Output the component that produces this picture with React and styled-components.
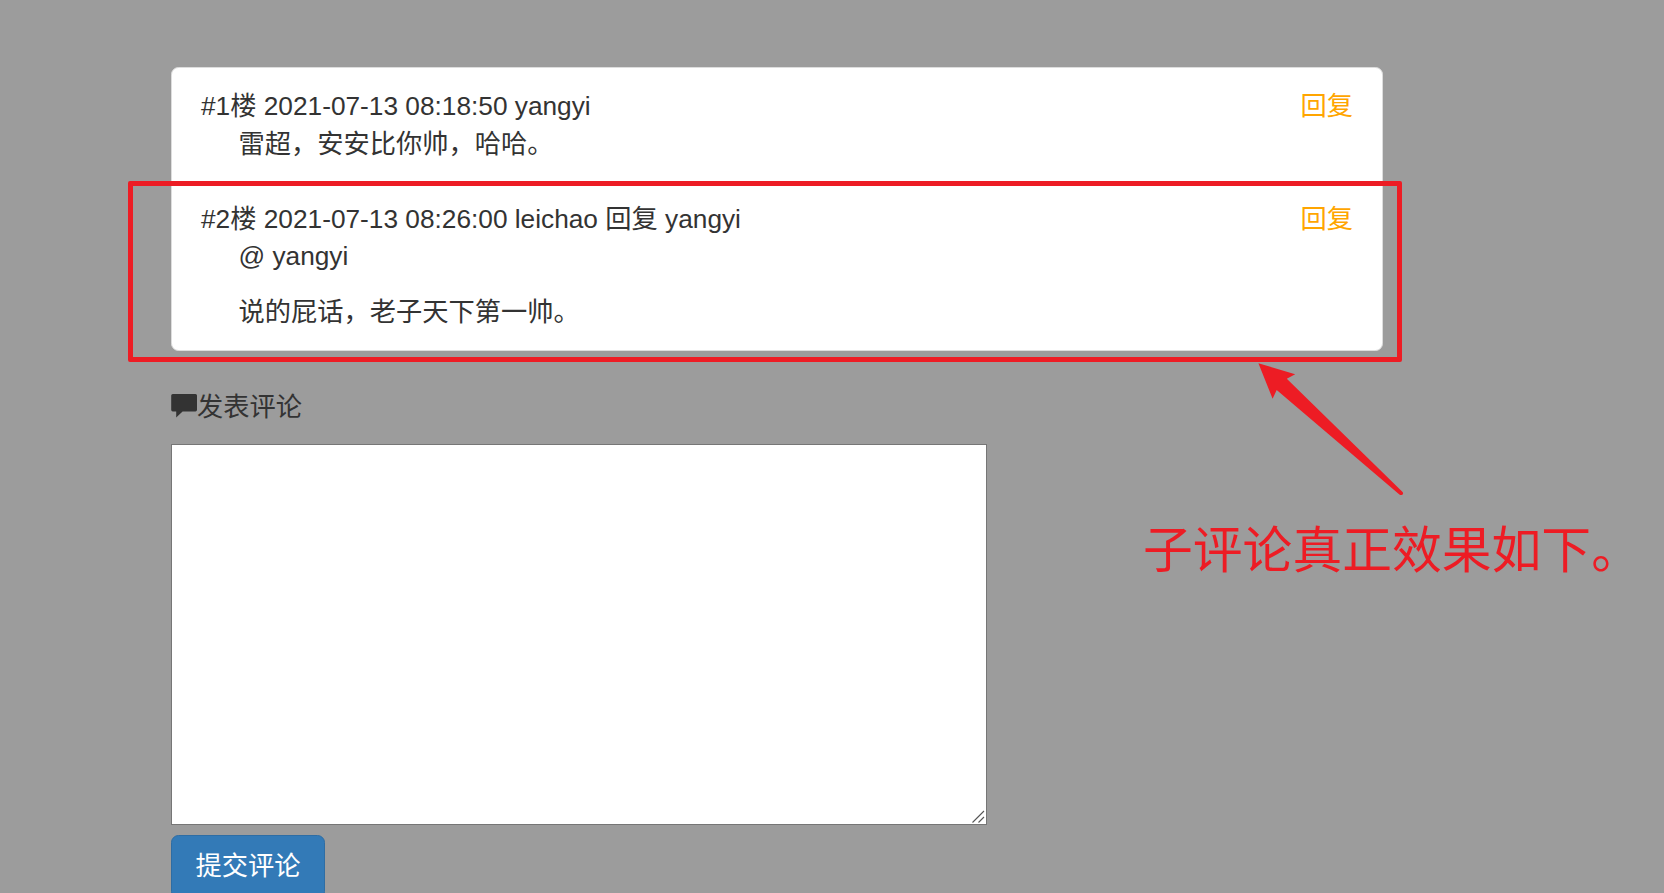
import React from 'react';
import styled, { createGlobalStyle } from 'styled-components';

const GlobalStyle = createGlobalStyle`
  * {
    box-sizing: border-box;
  }

  body {
    margin: 0;
    background: #9c9c9c;
    color: #333;
    font-family: "Liberation Sans", Arial, "Noto Sans CJK SC", sans-serif;
    font-size: 26.25px;
    line-height: 37.5px;
  }
`;

const Page = styled.div`
  position: relative;
  height: 893px;
  padding: 67px 281px 0 171px;
  overflow: hidden;
`;

const CommentList = styled.ul`
  margin: 0;
  padding: 0;
  list-style: none;
  background: #fff;
  border: 1px solid #ddd;
  border-radius: 7.5px;
`;

const CommentItem = styled.li`
  padding: 20px 29px 18.75px;

  & + & {
    border-top: 1px solid #ddd;
    padding-top: 18px;
    padding-bottom: 19px;
  }
`;

const CommentHeader = styled.div`
  display: flex;
  justify-content: space-between;
`;

const ReplyLink = styled.a`
  color: orange;
  cursor: pointer;
`;

const CommentBody = styled.div`
  padding-left: 37.5px;

  p {
    margin: 0;
  }

  p + p {
    margin-top: 18px;
  }
`;

const FormTitle = styled.div`
  display: flex;
  align-items: center;
  margin-top: 36px;

  svg {
    flex: none;
  }

  span {
    padding-top: 2px;
    margin-bottom: -2px;
  }
`;

const EditorWrap = styled.div`
  position: relative;
  width: 816px;
  height: 381px;
  margin-top: 19px;
`;

const Editor = styled.textarea`
  display: block;
  width: 100%;
  height: 100%;
  padding: 4px;
  border: 1px solid #767676;
  border-radius: 0;
  background: #fff;
  font: inherit;
  resize: none;
  outline: none;
`;

const Grip = styled.svg`
  position: absolute;
  right: 2px;
  bottom: 2px;
`;

const SubmitButton = styled.button`
  display: block;
  height: 64px;
  margin-top: 10px;
  padding: 0 23.5px;
  border: 1px solid #2e6da4;
  border-radius: 7.5px;
  background: #337ab7;
  color: #fff;
  font: inherit;
  cursor: pointer;
`;

// red marks lying over the page
const MarkBox = styled.div`
  position: absolute;
  left: 128px;
  top: 181px;
  width: 1274px;
  height: 181px;
  border: 5px solid #ed1c24;
  border-radius: 2px;
`;

const MarkArrow = styled.svg`
  position: absolute;
  left: 1258px;
  top: 363px;
`;

const MarkText = styled.div`
  position: absolute;
  left: 1143px;
  top: 514px;
  color: #ed1c24;
  font-size: 49.8px;
  line-height: 75px;
  white-space: nowrap;
`;

const comments = [
  {
    id: 1,
    title: '#1楼 2021-07-13 08:18:50 yangyi',
    lines: ['雷超，安安比你帅，哈哈。'],
  },
  {
    id: 2,
    title: '#2楼 2021-07-13 08:26:00 leichao 回复 yangyi',
    lines: ['@ yangyi', '说的屁话，老子天下第一帅。'],
  },
];

const CommentIcon = () => (
  <svg width="26" height="24" viewBox="0 0 26 24" fill="#333">
    <path d="M1.8 0H24.5Q26 0 26 1.6V15.8Q26 17.4 24.4 17.4H11.6L5.2 23.6V17.4H1.8Q0.2 17.4 0.2 15.8V1.6Q0.2 0 1.8 0Z"/>
  </svg>
);

const Comment = ({comment}) => (
  <CommentItem>
    <CommentHeader>
      <span>{comment.title}</span>
      <ReplyLink>回复</ReplyLink>
    </CommentHeader>
    <CommentBody>
      {comment.lines.map((line) => <p key={line}>{line}</p>)}
    </CommentBody>
  </CommentItem>
);

export default function App() {
  return (
    <Page>
      <GlobalStyle/>
      <CommentList>
        {comments.map((comment) => <Comment key={comment.id} comment={comment}/>)}
      </CommentList>
      <FormTitle>
        <CommentIcon/>
        <span>发表评论</span>
      </FormTitle>
      <EditorWrap>
        <Editor/>
        <Grip width="14" height="14" viewBox="0 0 14 14" stroke="#555" strokeWidth="1.1">
          <path d="M1.5 13.5L13 2M7.5 13.5L13 8"/>
        </Grip>
      </EditorWrap>
      <SubmitButton>提交评论</SubmitButton>
      <MarkBox/>
      <MarkArrow width="148" height="136" viewBox="0 0 148 136" fill="#ed1c24">
        <path d="M0.4 0.2L37.2 11.3L28.8 15.7L144.6 129Q145.6 130.6 144.6 131.6Q143.2 132.6 141.4 131.6L18.7 27L14.6 35.8Z"/>
      </MarkArrow>
      <MarkText>子评论真正效果如下。</MarkText>
    </Page>
  );
}
